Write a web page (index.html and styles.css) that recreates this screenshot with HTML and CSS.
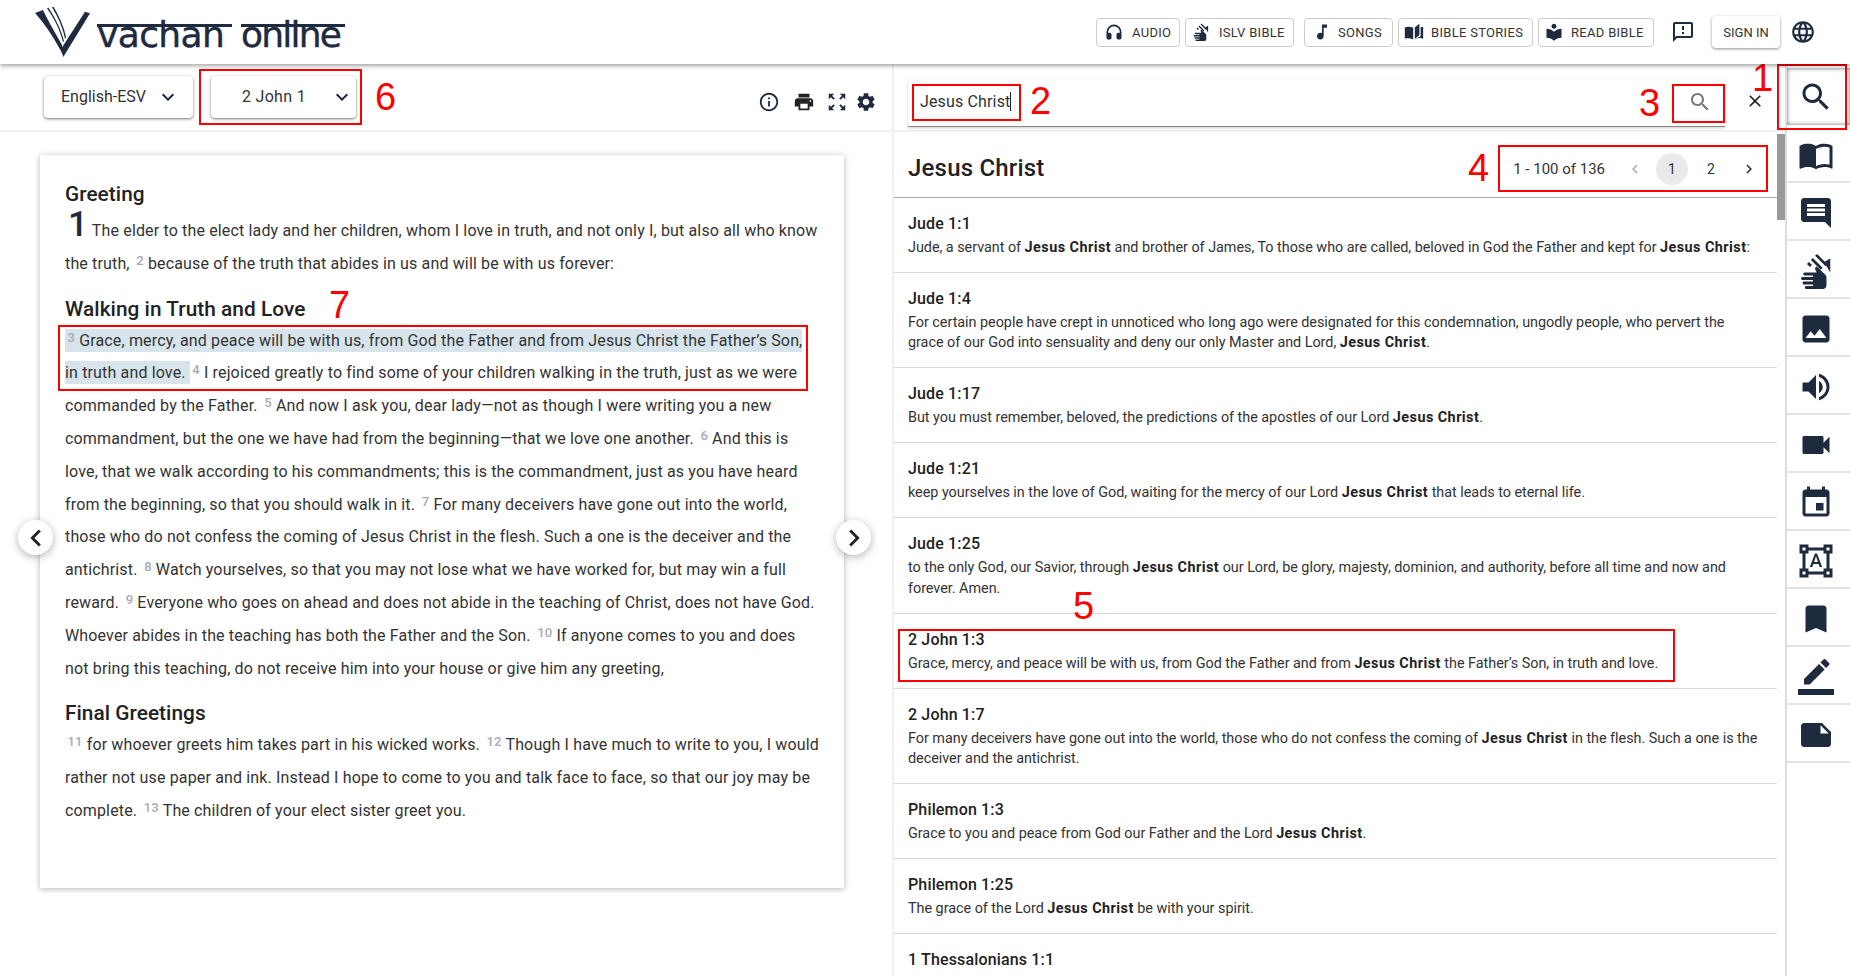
FILE: index.html
```html
<!DOCTYPE html>
<html lang="en">
<head>
  <meta charset="UTF-8">
  <title>Vachan Online</title>
  <link rel="stylesheet" href="styles.css">
</head>
<body>

  <svg class="defs" width="0" height="0">
    <symbol id="i-search" viewBox="0 0 24 24"><path d="M15.5 14h-.79l-.28-.27C15.41 12.59 16 11.11 16 9.5 16 5.91 13.09 3 9.5 3S3 5.91 3 9.5 5.91 16 9.5 16c1.61 0 3.09-.59 4.23-1.57l.27.28v.79l5 4.99L20.49 19l-4.99-5zm-6 0C7.01 14 5 11.99 5 9.5S7.01 5 9.5 5 14 7.01 14 9.5 11.99 14 9.5 14z"/></symbol>
    <symbol id="i-book" viewBox="0 0 24 24"><path d="M21 5c-1.11-.35-2.33-.5-3.5-.5-1.95 0-4.05.4-5.5 1.5-1.45-1.1-3.55-1.5-5.5-1.5S2.45 4.9 1 6v14.65c0 .25.25.5.5.5.1 0 .15-.05.25-.05C3.1 20.45 5.05 20 6.5 20c1.95 0 4.05.4 5.5 1.5 1.35-.85 3.8-1.5 5.5-1.5 1.65 0 3.35.3 4.75 1.05.1.05.15.05.25.05.25 0 .5-.25.5-.5V6c-.6-.45-1.25-.75-2-1zm0 13.5c-1.1-.35-2.3-.5-3.5-.5-1.7 0-4.15.65-5.5 1.5V8c1.35-.85 3.8-1.5 5.5-1.5 1.2 0 2.4.15 3.5.5v11.5z"/></symbol>
    <symbol id="i-comment" viewBox="0 0 24 24"><path d="M21.99 4c0-1.1-.89-2-1.99-2H4c-1.1 0-2 .9-2 2v12c0 1.1.9 2 2 2h14l4 4-.01-18zM18 14H6v-2h12v2zm0-3H6V9h12v2zm0-3H6V6h12v2z"/></symbol>
    <symbol id="i-sign" viewBox="0 0 24 24"><path d="M12.49 13l-.93-1.86c-.37-.74-.07-1.64.67-2.01l.26-.13 5.73 5.46c.5.47.78 1.13.78 1.81v5.23c0 1.38-1.12 2.5-2.5 2.5h-11c-.55 0-1-.45-1-1s.45-1 1-1H10v-1H4c-.55 0-1-.45-1-1s.45-1 1-1h6v-1H3c-.55 0-1-.45-1-1s.45-1 1-1h7v-1H4.500c-.55 0-1-.45-1-1s.45-1 1-1h7.990z"/><path d="M17.500 6l4-2.300V13zM12.700.6l7 7-1.300 1.300-7-7zM9.900 3.400l6.500 6.500-1.300 1.300-6.500-6.500zM7.300 6l2 2L8 9.300l-2-2z"/></symbol>
    <symbol id="i-image" viewBox="0 0 24 24"><path d="M21 19V5c0-1.100-.9-2-2-2H5c-1.100 0-2 .9-2 2v14c0 1.100.9 2 2 2h14c1.100 0 2-.9 2-2zM8.500 13.500l2.500 3.010L14.500 12l4.500 6H5l3.500-4.500z"/></symbol>
    <symbol id="i-volume" viewBox="0 0 24 24"><path d="M3 9v6h4l5 5V4L7 9H3zm13.500 3c0-1.770-1.020-3.290-2.500-4.030v8.050c1.480-.73 2.500-2.250 2.500-4.020zM14 3.230v2.060c2.890.86 5 3.540 5 6.710s-2.110 5.850-5 6.710v2.060c4.010-.91 7-4.490 7-8.770s-2.990-7.860-7-8.770z"/></symbol>
    <symbol id="i-video" viewBox="0 0 24 24"><path d="M17 10.500V7c0-.55-.45-1-1-1H4c-.55 0-1 .45-1 1v10c0 .55.45 1 1 1h12c.55 0 1-.45 1-1v-3.500l4 4v-11l-4 4z"/></symbol>
    <symbol id="i-event" viewBox="0 0 24 24"><path d="M17 12h-5v5h5v-5zM16 1v2H8V1H6v2H5c-1.110 0-1.990.9-1.990 2L3 19c0 1.100.89 2 2 2h14c1.100 0 2-.9 2-2V5c0-1.100-.9-2-2-2h-1V1h-2zm3 18H5V8h14v11z"/></symbol>
    <symbol id="i-shapes" viewBox="0 0 24 24"><path d="M23 7V1h-6v2H7V1H1v6h2v10H1v6h6v-2h10v2h6v-6h-2V7h2zM3 3h2v2H3V3zm2 18H3v-2h2v2zm12-2H7v-2H5V7h2V5h10v2h2v10h-2v2zm4 2h-2v-2h2v2zM19 5V3h2v2h-2zm-5.270 9h-3.490l-.73 2H7.890l3.400-9h1.400l3.410 9h-1.630l-.74-2zm-3.040-1.260h2.610L12 8.910l-1.310 3.830z"/></symbol>
    <symbol id="i-bookmark" viewBox="0 0 24 24"><path d="M17 3H7c-1.100 0-1.990.9-1.990 2L5 21l7-3 7 3V5c0-1.100-.9-2-2-2z"/></symbol>
    <symbol id="i-pen" viewBox="0 0 24 24"><path d="M17.750 7L14 3.250l-10 10V17h3.750l10-10zm2.960-2.960c.39-.39.39-1.020 0-1.410L18.370.29c-.39-.39-1.020-.39-1.410 0L15 2.250 18.750 6l1.960-1.960z"/><path d="M0 20h24v4H0z"/></symbol>
    <symbol id="i-note" viewBox="0 0 24 24"><path d="M22 10l-6-6H4c-1.100 0-2 .9-2 2v12.010c0 1.100.9 1.990 2 1.990l16-.01c1.100 0 2-.89 2-1.990v-8zm-7-4.500l5.500 5.500H15V5.500z"/></symbol>
    <symbol id="i-headset" viewBox="0 0 24 24"><path d="M12 3a9 9 0 0 0-9 9v7c0 1.100.9 2 2 2h2c1.100 0 2-.9 2-2v-4c0-1.100-.9-2-2-2H5v-1a7 7 0 0 1 14 0v1h-2c-1.100 0-2 .9-2 2v4c0 1.100.9 2 2 2h2c1.100 0 2-.9 2-2v-7a9 9 0 0 0-9-9z"/></symbol>
    <symbol id="i-note-music" viewBox="0 0 24 24"><path d="M12 3v10.550c-.59-.34-1.270-.55-2-.55-2.210 0-4 1.790-4 4s1.790 4 4 4 4-1.790 4-4V7h4V3h-6z"/></symbol>
    <symbol id="i-library" viewBox="0 0 24 24"><path d="M12 11.550C9.640 9.350 6.480 8 3 8v11c3.480 0 6.640 1.350 9 3.550 2.360-2.190 5.520-3.550 9-3.550V8c-3.480 0-6.640 1.350-9 3.550zM12 8c1.660 0 3-1.340 3-3s-1.340-3-3-3-3 1.340-3 3 1.340 3 3 3z"/></symbol>
    <symbol id="i-stories" viewBox="0 0 24 24"><path d="M1 6.500c3-1.200 6.500-1.200 10 .5v14c-3-1.600-6.500-1.900-10-1zM13 6.500l5.500-4.500v13.500L13 20zM20 6h3v14c-3-1-6-1-10 1v-.4l7-3.600z"/></symbol>
    <symbol id="i-feedback" viewBox="0 0 24 24"><path d="M20 2H4c-1.100 0-1.990.9-1.990 2L2 22l4-4h14c1.100 0 2-.9 2-2V4c0-1.100-.9-2-2-2zm0 14H5.170L4 17.170V4h16v12zM11 12h2v2h-2zm0-6h2v4h-2z"/></symbol>
    <symbol id="i-globe" viewBox="0 0 24 24"><path d="M11.990 2C6.470 2 2 6.480 2 12s4.470 10 9.990 10C17.520 22 22 17.520 22 12S17.520 2 11.990 2zm6.930 6h-2.950c-.32-1.250-.78-2.450-1.380-3.560 1.840.63 3.370 1.910 4.330 3.560zM12 4.040c.83 1.200 1.480 2.530 1.910 3.960h-3.820c.43-1.430 1.080-2.760 1.910-3.960zM4.260 14C4.100 13.360 4 12.690 4 12s.1-1.360.26-2h3.380c-.08.66-.14 1.320-.14 2 0 .68.06 1.340.14 2H4.260zm.82 2h2.950c.32 1.250.78 2.450 1.380 3.560-1.840-.63-3.370-1.900-4.330-3.560zm2.950-8H5.080c.96-1.660 2.490-2.930 4.330-3.560C8.810 5.550 8.350 6.750 8.030 8zM12 19.960c-.83-1.200-1.480-2.530-1.910-3.960h3.820c-.43 1.430-1.080 2.760-1.910 3.960zM14.340 14H9.660c-.09-.66-.16-1.320-.16-2 0-.68.07-1.350.16-2h4.680c.09.65.16 1.320.16 2 0 .68-.07 1.340-.16 2zm.25 5.560c.6-1.110 1.060-2.310 1.380-3.560h2.950c-.96 1.650-2.490 2.930-4.330 3.560zM16.360 14c.08-.66.14-1.320.14-2 0-.68-.06-1.340-.14-2h3.380c.16.64.26 1.310.26 2s-.1 1.360-.26 2h-3.380z"/></symbol>
    <symbol id="i-info" viewBox="0 0 24 24"><path d="M11 7h2v2h-2zm0 4h2v6h-2zm1-9C6.480 2 2 6.480 2 12s4.480 10 10 10 10-4.480 10-10S17.520 2 12 2zm0 18c-4.410 0-8-3.590-8-8s3.590-8 8-8 8 3.590 8 8-3.590 8-8 8z"/></symbol>
    <symbol id="i-print" viewBox="0 0 24 24"><path d="M19 8H5c-1.660 0-3 1.340-3 3v6h4v4h12v-4h4v-6c0-1.660-1.340-3-3-3zm-3 11H8v-5h8v5zm3-7c-.55 0-1-.45-1-1s.45-1 1-1 1 .45 1 1-.45 1-1 1zm-1-9H6v4h12V3z"/></symbol>
    <symbol id="i-expand" viewBox="0 0 24 24"><path d="M15 3l2.300 2.300-2.890 2.870 1.420 1.420L18.700 6.700 21 9V3zM3 9l2.300-2.300 2.870 2.890 1.420-1.420L6.700 5.300 9 3H3zm6 12l-2.300-2.300 2.890-2.870-1.420-1.420L5.300 17.300 3 15v6zm12-6l-2.300 2.300-2.870-2.890-1.420 1.420 2.890 2.870L15 21h6z"/></symbol>
    <symbol id="i-gear" viewBox="0 0 24 24"><path d="M19.140 12.940c.04-.3.060-.61.060-.94 0-.32-.02-.64-.07-.94l2.030-1.580c.18-.14.23-.41.120-.61l-1.920-3.320c-.12-.22-.37-.29-.59-.22l-2.390.96c-.5-.38-1.030-.7-1.620-.94l-.36-2.540c-.04-.24-.24-.41-.48-.41h-3.840c-.24 0-.43.17-.47.41l-.36 2.540c-.59.24-1.130.57-1.620.94l-2.390-.96c-.22-.08-.47 0-.59.22L2.740 8.870c-.12.21-.08.47.12.61l2.030 1.580c-.05.3-.09.63-.09.94s.02.64.07.94l-2.030 1.580c-.18.14-.23.41-.12.61l1.920 3.320c.12.22.37.29.59.22l2.390-.96c.5.38 1.030.7 1.620.94l.36 2.540c.05.24.24.41.48.41h3.840c.24 0 .44-.17.47-.41l.36-2.540c.59-.24 1.130-.56 1.620-.94l2.390.96c.22.08.47 0 .59-.22l1.920-3.320c.12-.22.07-.47-.12-.61l-2.010-1.580zM12 15.600c-1.980 0-3.600-1.620-3.600-3.600s1.620-3.600 3.600-3.600 3.600 1.620 3.600 3.600-1.620 3.600-3.600 3.600z"/></symbol>
    <symbol id="i-chev" viewBox="0 0 24 24"><path d="M16.590 8.590L12 13.170 7.410 8.590 6 10l6 6 6-6z"/></symbol>
    <symbol id="i-left" viewBox="0 0 24 24"><path d="M15.410 7.410L14 6l-6 6 6 6 1.410-1.410L10.830 12z"/></symbol>
    <symbol id="i-right" viewBox="0 0 24 24"><path d="M10 6L8.590 7.410 13.170 12l-4.580 4.590L10 18l6-6z"/></symbol>
    <symbol id="i-close" viewBox="0 0 24 24"><path d="M19 6.410L17.590 5 12 10.590 6.410 5 5 6.410 10.590 12 5 17.590 6.410 19 12 13.410 17.590 19 19 17.590 13.410 12z"/></symbol>
  </svg>

  <header class="topbar">
    <div class="logo">
      <svg class="logo-mark" viewBox="0 0 58 58"><path d="M1 10L9 7C14 18 22 31 28 42L29.500 53C22 38 12 22 1 10z"/><path d="M51 8.700L56 10.300 29.300 54 27 46z"/><path d="M13 5.300l1.500-.5C21 15 27 26 30 38l-1 1C26 27 20 15 13 5.300zM18 4.300l1.500-.5C25 13 30 24 32 34l-1 2C29 25 24 14 18 4.300z"/></svg>
      <span class="logo-text"><span class="logo-word word-a">vachan</span><span class="logo-word word-b">online</span></span>
    </div>
    <nav class="topnav">
      <a class="navbtn btn-audio"><svg class="ico20"><use href="#i-headset"/></svg>AUDIO</a>
      <a class="navbtn btn-islv"><svg class="ico18"><use href="#i-sign"/></svg>ISLV BIBLE</a>
      <a class="navbtn btn-songs"><svg class="ico20"><use href="#i-note-music"/></svg>SONGS</a>
      <a class="navbtn btn-stories"><svg class="ico20"><use href="#i-stories"/></svg>BIBLE STORIES</a>
      <a class="navbtn btn-read"><svg class="ico20"><use href="#i-library"/></svg>READ BIBLE</a>
      <svg class="ico24 feedback"><use href="#i-feedback"/></svg>
      <a class="signin">SIGN IN</a>
      <svg class="ico26 globe"><use href="#i-globe"/></svg>
    </nav>
  </header>

  <main class="main">
    <section class="reader">
      <div class="reader-tools">
        <button class="select select-version">English-ESV<svg class="ico24"><use href="#i-chev"/></svg></button>
        <button class="select select-chapter"><span>2 John 1</span><svg class="ico24"><use href="#i-chev"/></svg></button>
        <div class="tool-icons">
          <svg class="ico22 navy tool-info"><use href="#i-info"/></svg>
          <svg class="ico22"><use href="#i-print"/></svg>
          <svg class="ico22 navy"><use href="#i-expand"/></svg>
          <svg class="ico22 navy tool-gear"><use href="#i-gear"/></svg>
        </div>
      </div>
      <div class="reader-body">
        <article class="page">
          <h3>Greeting</h3>
          <p class="first"><span class="chap">1</span> The elder to the elect lady and her children, whom I love in truth, and not only I, but also all who know the truth, <sup>2</sup> because of the truth that abides in us and will be with us forever:</p>
          <h3>Walking in Truth and Love</h3>
          <p><mark><sup>3</sup> Grace, mercy, and peace will be with us, from God the Father and from Jesus Christ the Father’s Son, in truth and love.&nbsp;</mark><sup>4</sup> I rejoiced greatly to find some of your children walking in the truth, just as we were commanded by the Father. <sup>5</sup> And now I ask you, dear lady—not as though I were writing you a new commandment, but the one we have had from the beginning—that we love one another. <sup>6</sup> And this is love, that we walk according to his commandments; this is the commandment, just as you have heard from the beginning, so that you should walk in it. <sup>7</sup> For many deceivers have gone out into the world, those who do not confess the coming of Jesus Christ in the flesh. Such a one is the deceiver and the antichrist. <sup>8</sup> Watch yourselves, so that you may not lose what we have worked for, but may win a full reward. <sup>9</sup> Everyone who goes on ahead and does not abide in the teaching of Christ, does not have God. Whoever abides in the teaching has both the Father and the Son. <sup>10</sup> If anyone comes to you and does not bring this teaching, do not receive him into your house or give him any greeting,</p>
          <h3>Final Greetings</h3>
          <p><sup>11</sup> for whoever greets him takes part in his wicked works. <sup>12</sup> Though I have much to write to you, I would rather not use paper and ink. Instead I hope to come to you and talk face to face, so that our joy may be complete. <sup>13</sup> The children of your elect sister greet you.</p>
        </article>
        <button class="round round-prev"><svg class="ico34"><use href="#i-left"/></svg></button>
        <button class="round round-next"><svg class="ico34"><use href="#i-right"/></svg></button>
      </div>
    </section>

    <section class="search">
      <div class="search-top">
        <div class="search-box">
          <span class="search-input">Jesus Christ<i class="caret"></i></span>
          <svg class="ico24 grey"><use href="#i-search"/></svg>
        </div>
        <svg class="ico20 close"><use href="#i-close"/></svg>
      </div>
      <div class="search-body">
        <div class="results">
          <div class="results-head">
            <h2>Jesus Christ</h2>
            <div class="pager">
              <span class="pager-count">1 - 100 of 136</span>
              <svg class="ico18 faint"><use href="#i-left"/></svg>
              <span class="pager-num on">1</span>
              <span class="pager-num">2</span>
              <svg class="ico18"><use href="#i-right"/></svg>
            </div>
          </div>
          <div class="hit"><h4>Jude 1:1</h4><p>Jude, a servant of <b>Jesus Christ</b> and brother of James, To those who are called, beloved in God the Father and kept for <b>Jesus Christ</b>:</p></div>
          <div class="hit"><h4>Jude 1:4</h4><p>For certain people have crept in unnoticed who long ago were designated for this condemnation, ungodly people, who pervert the grace of our God into sensuality and deny our only Master and Lord, <b>Jesus Christ</b>.</p></div>
          <div class="hit"><h4>Jude 1:17</h4><p>But you must remember, beloved, the predictions of the apostles of our Lord <b>Jesus Christ</b>.</p></div>
          <div class="hit"><h4>Jude 1:21</h4><p>keep yourselves in the love of God, waiting for the mercy of our Lord <b>Jesus Christ</b> that leads to eternal life.</p></div>
          <div class="hit"><h4>Jude 1:25</h4><p>to the only God, our Savior, through <b>Jesus Christ</b> our Lord, be glory, majesty, dominion, and authority, before all time and now and forever. Amen.</p></div>
          <div class="hit"><h4>2 John 1:3</h4><p>Grace, mercy, and peace will be with us, from God the Father and from <b>Jesus Christ</b> the Father’s Son, in truth and love.</p></div>
          <div class="hit"><h4>2 John 1:7</h4><p>For many deceivers have gone out into the world, those who do not confess the coming of <b>Jesus Christ</b> in the flesh. Such a one is the deceiver and the antichrist.</p></div>
          <div class="hit"><h4>Philemon 1:3</h4><p>Grace to you and peace from God our Father and the Lord <b>Jesus Christ</b>.</p></div>
          <div class="hit"><h4>Philemon 1:25</h4><p>The grace of the Lord <b>Jesus Christ</b> be with your spirit.</p></div>
          <div class="hit hit-last"><h4>1 Thessalonians 1:1</h4></div>
        </div>
        <div class="scroll"><div class="scroll-thumb"></div></div>
      </div>
    </section>

    <aside class="rail">
      <div class="rail-item active"><svg class="ico36"><use href="#i-search"/></svg></div>
      <div class="rail-item"><svg class="ico36"><use href="#i-book"/></svg></div>
      <div class="rail-item"><svg class="ico36"><use href="#i-comment"/></svg></div>
      <div class="rail-item"><svg class="ico36"><use href="#i-sign"/></svg></div>
      <div class="rail-item"><svg class="ico36"><use href="#i-image"/></svg></div>
      <div class="rail-item"><svg class="ico36"><use href="#i-volume"/></svg></div>
      <div class="rail-item"><svg class="ico36"><use href="#i-video"/></svg></div>
      <div class="rail-item"><svg class="ico36"><use href="#i-event"/></svg></div>
      <div class="rail-item"><svg class="ico36"><use href="#i-shapes"/></svg></div>
      <div class="rail-item"><svg class="ico36"><use href="#i-bookmark"/></svg></div>
      <div class="rail-item"><svg class="ico36"><use href="#i-pen"/></svg></div>
      <div class="rail-item"><svg class="ico36"><use href="#i-note"/></svg></div>
    </aside>
  </main>

  <!-- red callouts drawn over the screenshot -->
  <div class="box box-1"></div>
  <div class="box box-2"></div>
  <div class="box box-3"></div>
  <div class="box box-4"></div>
  <div class="box box-5"></div>
  <div class="box box-6"></div>
  <div class="box box-7"></div>
  <span class="num num-1">1</span>
  <span class="num num-2">2</span>
  <span class="num num-3">3</span>
  <span class="num num-4">4</span>
  <span class="num num-5">5</span>
  <span class="num num-6">6</span>
  <span class="num num-7">7</span>

</body>
</html>
```

FILE: styles.css
```css
* {
  box-sizing: border-box;
}

html, body {
  height: 100%;
}

body {
  margin: 0;
  overflow: hidden;
  font-family: Roboto, "Liberation Sans", sans-serif;
  color: #333;
  background: #fff;
  display: flex;
  flex-direction: column;
}

.defs {
  position: absolute;
}

svg {
  fill: currentColor;
  flex: none;
  display: block;
}

.ico18 { width: 18px; height: 18px; }
.ico20 { width: 20px; height: 20px; }
.ico22 { width: 22px; height: 22px; }
.ico24 { width: 24px; height: 24px; }
.ico26 { width: 26px; height: 26px; }
.ico34 { width: 34px; height: 34px; }
.ico36 { width: 36px; height: 36px; }

.navy { color: #1e2b3f; }
.grey { color: #777; }
.faint { color: #aaa; }

/* top bar */
.topbar {
  height: 64px;
  flex: none;
  display: flex;
  align-items: center;
  justify-content: space-between;
  padding: 0 34px 0 34px;
  background: #fff;
  box-shadow: 0 2px 4px rgba(0, 0, 0, 0.35);
  position: relative;
  z-index: 2;
}

.logo {
  display: flex;
  align-items: flex-start;
  color: #1e2b3f;
  height: 64px;
}

.logo-mark {
  width: 58px;
  height: 58px;
  margin: 3px 5px 0 0;
}

.logo-text {
  display: flex;
  font-family: "DejaVu Sans", sans-serif;
  font-size: 36px;
  line-height: 40px;
  margin-top: 15px;
  -webkit-text-stroke: 0.4px #1e2b3f;
}

.logo-word {
  position: relative;
  white-space: nowrap;
}

.logo-word::before {
  content: "";
  position: absolute;
  left: 0;
  right: 0;
  top: 9px;
  height: 3px;
  background: #1e2b3f;
}

.word-a {
  width: 135px;
  letter-spacing: -0.6px;
  margin-right: 9px;
}

.word-b {
  width: 104px;
  letter-spacing: -1.8px;
}

.topnav {
  display: flex;
  align-items: center;
  color: #1e2b3f;
}

.navbtn {
  height: 29px;
  display: flex;
  align-items: center;
  white-space: nowrap;
  font-size: 13px;
  letter-spacing: 0.3px;
  color: #333;
  border: 1px solid #ccc;
  border-radius: 4px;
  margin-right: 5px;
}

.navbtn svg {
  color: #1e2b3f;
}

.btn-audio { width: 84px; padding-left: 7px; gap: 8px; }
.btn-islv { width: 109px; margin-right: 10px; padding-left: 6px; gap: 9px; }
.btn-songs { width: 89px; padding-left: 7px; gap: 6px; }
.btn-stories { width: 135px; padding-left: 5px; gap: 7px; }
.btn-read { width: 116px; padding-left: 5px; gap: 7px; }

.feedback {
  margin: 0 17px 0 12px;
}

.signin {
  width: 68px;
  height: 32px;
  display: flex;
  align-items: center;
  justify-content: center;
  font-size: 13px;
  color: #333;
  border-radius: 4px;
  box-shadow: 0 1px 3px rgba(0, 0, 0, 0.45);
}

.globe {
  margin-left: 10px;
}

/* page under the bar */
.main {
  flex: 1;
  min-height: 0;
  display: flex;
}

.reader {
  width: 892px;
  flex: none;
  display: flex;
  flex-direction: column;
}

.reader-tools {
  height: 68px;
  flex: none;
  display: flex;
  align-items: center;
  padding: 0 15px 0 44px;
  border-bottom: 2px solid #f0f0f0;
}

.select {
  height: 42px;
  display: flex;
  align-items: center;
  border: none;
  background: #fff;
  font: 16px Roboto, sans-serif;
  color: #333;
  border-radius: 4px;
  box-shadow: 0 1px 3px rgba(0, 0, 0, 0.55);
}

.select svg {
  color: #1e2b3f;
}

.select-version {
  width: 149px;
  padding: 0 13px 1px 17px;
  justify-content: space-between;
}

.select-chapter {
  width: 145px;
  margin-left: 18px;
  padding: 0 2px 1px 31px;
  justify-content: space-between;
  letter-spacing: 0.3px;
}

.tool-icons {
  margin-left: auto;
  display: flex;
  align-items: center;
  gap: 11px;
  padding-top: 10px;
  color: #222;
}

.tool-info { margin-right: 2px; }
.tool-gear { margin-left: -4px; }

.reader-body {
  flex: 1;
  position: relative;
  padding: 23px 48px 0 40px;
}

.page {
  height: 733px;
  padding: 24px 25px 0;
  background: #fff;
  box-shadow: 0 1px 6px rgba(0, 0, 0, 0.3);
  font-size: 16px;
  line-height: 32.8px;
  letter-spacing: 0.15px;
}

.page h3 {
  margin: 13px 0 0;
  font-size: 20.8px;
  font-weight: 500;
  line-height: 31px;
  letter-spacing: 0.05px;
  color: #222;
}

.page h3:first-child {
  margin-top: 0;
}

.page p {
  margin: 0;
}

.page .first {
  margin-top: 5px;
}

.page sup {
  font-size: 13px;
  font-weight: 500;
  line-height: 0;
  vertical-align: 4px;
  color: #a5abb8;
  margin-left: 2.5px;
}

.page mark {
  background: #d7e4ec;
  color: inherit;
  padding: 2px 0;
}

.chap {
  font-size: 35px;
  font-weight: 500;
  line-height: 0;
  color: #1e2b3f;
  margin: 0 0 0 3px;
}

.round {
  position: absolute;
  top: 388px;
  width: 35px;
  height: 35px;
  padding: 0;
  border: none;
  border-radius: 50%;
  background: #fff;
  color: #222;
  box-shadow: 0 2px 8px rgba(0, 0, 0, 0.3);
  display: flex;
  align-items: center;
  justify-content: center;
}

.round-prev { left: 18px; }
.round-next { left: 836px; }

/* search column */
.search {
  flex: 1;
  min-width: 0;
  display: flex;
  flex-direction: column;
  border-left: 2px solid #f0f0f0;
}

.search-top {
  height: 68px;
  flex: none;
  display: flex;
  align-items: center;
  padding: 0 15px 0 14px;
  border-bottom: 2px solid #f0f0f0;
}

.search-box {
  width: 817px;
  height: 48px;
  display: flex;
  align-items: center;
  justify-content: space-between;
  padding: 0 13px 2px 12px;
  margin-top: 12px;
  border-bottom: 1px solid #888;
  box-shadow: 0 1px 3px rgba(0, 0, 0, 0.2);
  border-radius: 4px 4px 0 0;
}

.search-input {
  font-size: 16px;
  display: flex;
  align-items: center;
  letter-spacing: 0.15px;
}

.caret {
  width: 1px;
  height: 19px;
  background: #222;
}

.close {
  margin: 8px 0 0 20px;
  color: #222;
}

.search-body {
  flex: 1;
  min-height: 0;
  display: flex;
}

.results {
  flex: 1;
  min-width: 0;
  overflow: hidden;
}

.results-head {
  height: 66px;
  display: flex;
  align-items: center;
  justify-content: space-between;
  padding: 6px 19px 0 14px;
  border-bottom: 1px solid #aaa;
}

.results-head h2 {
  margin: 0;
  font-size: 24px;
  font-weight: 500;
  letter-spacing: 0.2px;
  color: #222;
}

.pager {
  display: flex;
  align-items: center;
  font-size: 15px;
  margin-top: 3px;
}

.pager-count {
  margin-right: 21px;
}

.pager-num {
  width: 32px;
  height: 32px;
  border-radius: 50%;
  display: flex;
  align-items: center;
  justify-content: center;
  font-size: 14px;
}

.pager-num.on {
  background: #eaeaea;
  margin: 0 7px 0 12px;
}

.pager-num.on + .pager-num {
  margin-right: 13px;
}

.hit {
  padding: 14px 14px 13.700px;
  border-bottom: 1px solid #d8d8d8;
}

.hit-last {
  border-bottom: none;
  padding-bottom: 0;
}

.hit h4 {
  margin: 0;
  font-size: 16px;
  font-weight: 500;
  line-height: 24px;
  letter-spacing: 0.15px;
  color: #222;
}

.hit p {
  margin: 2px 0 0;
  font-size: 14.4px;
  line-height: 20.3px;
  letter-spacing: -0.03px;
}

.hit b {
  font-weight: 700;
  letter-spacing: 0.45px;
  color: #222;
}

.scroll {
  width: 8px;
  flex: none;
}

.scroll-thumb {
  height: 86px;
  margin-top: 2px;
  background: #999;
}

/* right rail */
.rail {
  width: 65px;
  flex: none;
  padding-top: 4px;
  border-left: 2px solid #ddd;
  color: #1e2b3f;
}

.rail-item {
  height: 58px;
  display: flex;
  align-items: center;
  justify-content: center;
  padding: 3px 5px 0 0;
  border-bottom: 2px solid #e4e4e4;
}

.rail-item.active {
  height: 57px;
  padding-top: 0;
  border-bottom: none;
  box-shadow: inset 0 0 4px rgba(0, 0, 0, 0.6);
}

/* callouts */
.box {
  position: absolute;
  border: 2px solid #f00;
}

.box-1 { left: 1777px; top: 64px; width: 70px; height: 66px; }
.box-2 { left: 912px; top: 84px; width: 109px; height: 37px; }
.box-3 { left: 1672px; top: 84px; width: 53px; height: 39px; }
.box-4 { left: 1498px; top: 145px; width: 270px; height: 47px; }
.box-5 { left: 898px; top: 629px; width: 777px; height: 53px; }
.box-6 { left: 199px; top: 69px; width: 163px; height: 56px; }
.box-7 { left: 58px; top: 325px; width: 750px; height: 66px; }

.num {
  position: absolute;
  font-family: "Liberation Sans", Arial, sans-serif;
  font-size: 38px;
  line-height: 40px;
  color: #f00;
}

.num-1 { left: 1752px; top: 58px; }
.num-2 { left: 1030px; top: 81px; }
.num-3 { left: 1639px; top: 83px; }
.num-4 { left: 1468px; top: 148px; }
.num-5 { left: 1073px; top: 586px; }
.num-6 { left: 375px; top: 77px; }
.num-7 { left: 329px; top: 285px; }
```
